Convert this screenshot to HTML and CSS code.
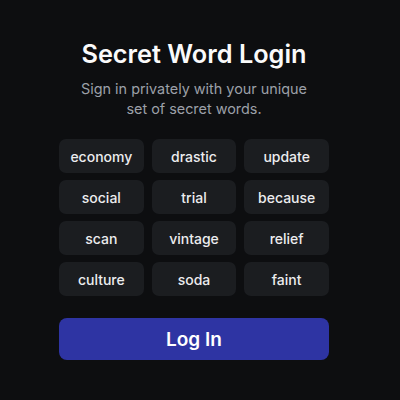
FILE: index.html
```html
<!DOCTYPE html>
<html lang="en">
<head>
  <meta charset="UTF-8" />
  <title>Secret Word Login</title>
  <link rel="stylesheet" href="styles.css">
</head>
<body>
  <div class="login">
    <h1>Secret Word Login</h1>
    <p class="sub">Sign in privately with your unique set of secret words.</p>

    <div class="words">
      <div class="word">economy</div>
      <div class="word">drastic</div>
      <div class="word">update</div>
      <div class="word">social</div>
      <div class="word">trial</div>
      <div class="word">because</div>
      <div class="word">scan</div>
      <div class="word">vintage</div>
      <div class="word">relief</div>
      <div class="word">culture</div>
      <div class="word">soda</div>
      <div class="word">faint</div>
    </div>

    <button class="login-btn">Log In</button>
  </div>
</body>
</html>
```

FILE: styles.css
```css
* { margin: 0; padding: 0; box-sizing: border-box; }
html, body {
  width: 100%;
  height: 100%;
  background-color: #0d0e10;
  font-family: Inter, "Noto Sans", sans-serif;
  color: #f3f4f6;
  overflow: hidden;
}
body { padding-right: 12px; }

.login {
  width: 270px;
  margin: 0 auto;
  padding-top: 37px;
  display: flex;
  flex-direction: column;
  align-items: center;
}
.login h1 {
  font-size: 25.3px;
  font-weight: 600;
  line-height: 34px;
  color: #fafafa;
}
.sub {
  margin-top: 8px;
  width: 240px;
  font-size: 14.4px;
  line-height: 20px;
  color: #9ca0a8;
  text-align: center;
}

.words {
  margin-top: 20px;
  width: 100%;
  display: grid;
  grid-template-columns: repeat(3, 1fr);
  gap: 7px 8px;
}
.word {
  height: 34px;
  background: #1b1d20;
  border-radius: 7px;
  display: flex;
  align-items: center;
  justify-content: center;
  font-size: 14px;
  font-weight: 500;
  color: #ececee;
}

.login-btn {
  margin-top: 22px;
  width: 100%;
  height: 42px;
  border: none;
  border-radius: 8px;
  background: #2e34a3;
  color: #ffffff;
  font-family: inherit;
  font-size: 19px;
  font-weight: 600;
}
```
